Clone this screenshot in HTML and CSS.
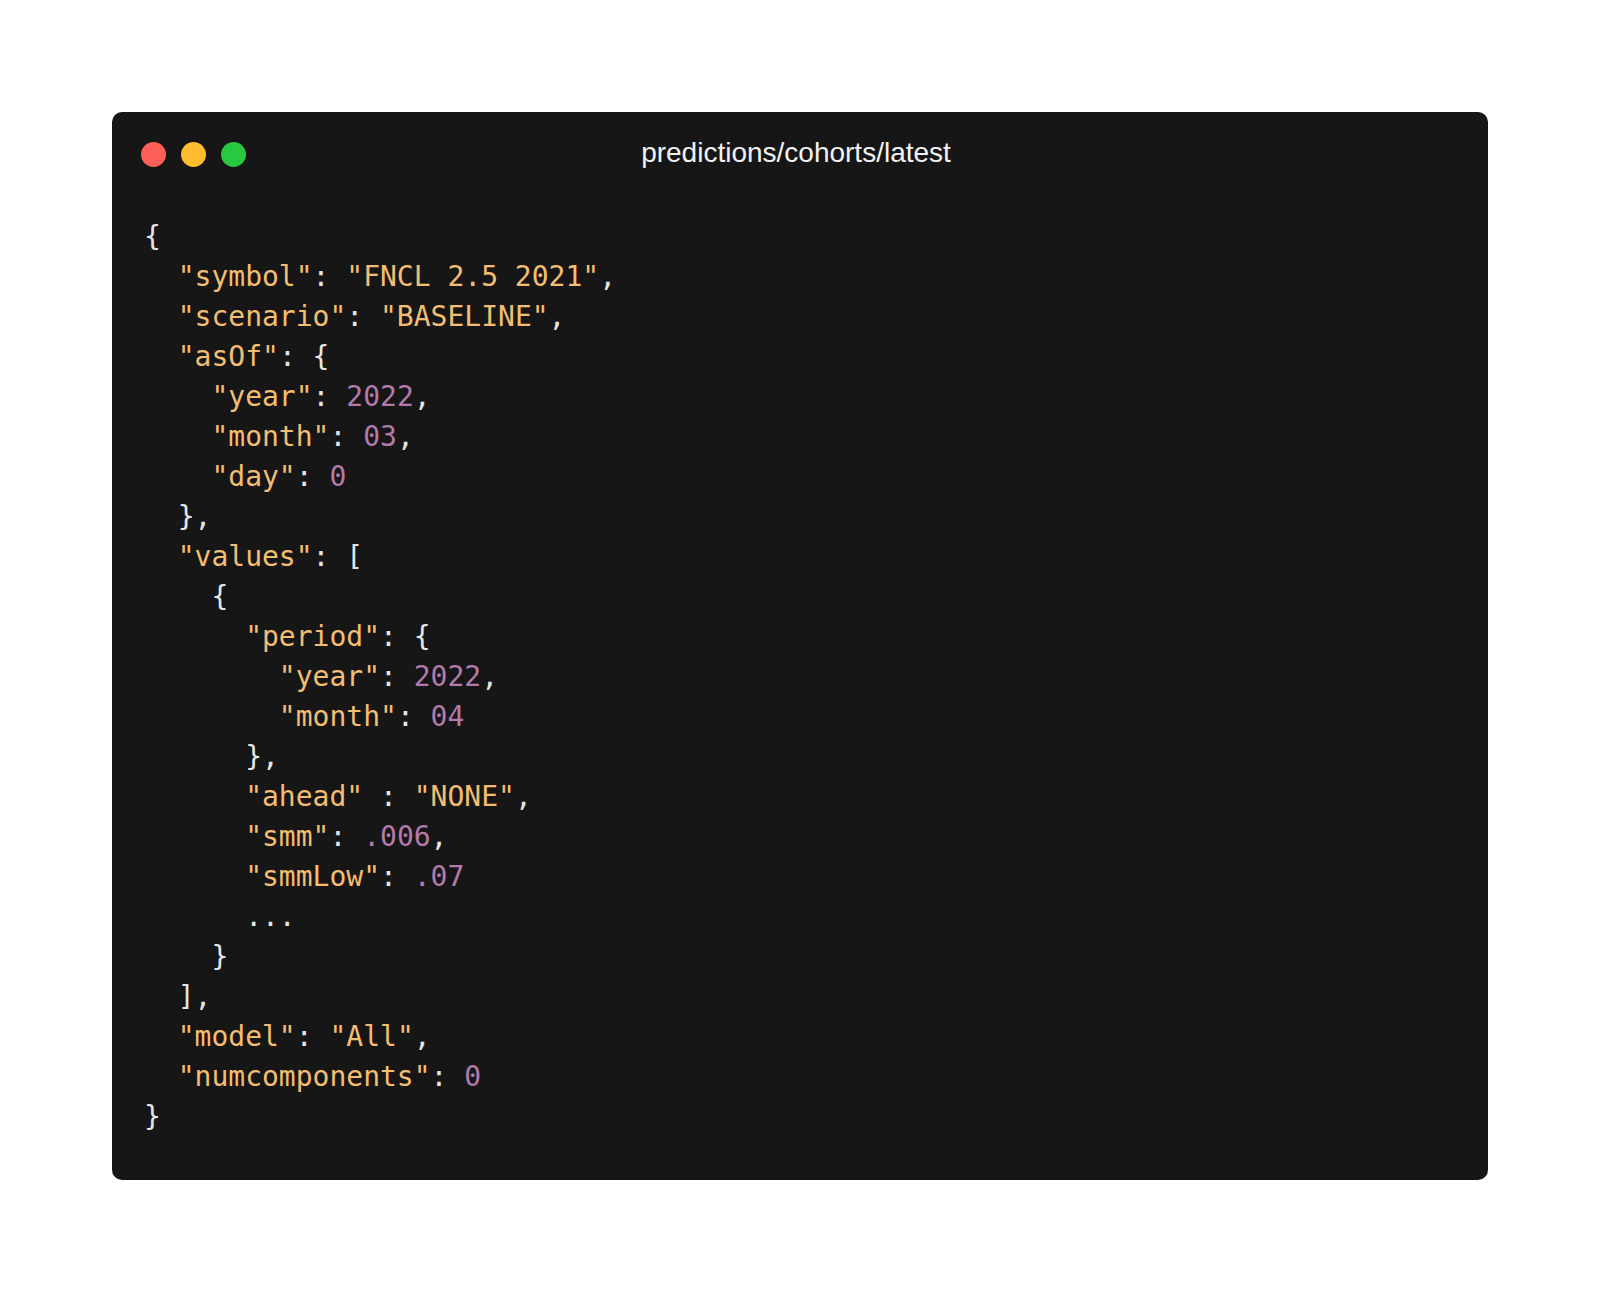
FILE: index.html
```html
<!DOCTYPE html>
<html lang="en">
<head>
  <meta charset="UTF-8" />
  <title>predictions/cohorts/latest</title>
  <link rel="stylesheet" href="styles.css">
</head>
<body>
  <div class="page">
    <div class="window">
      <div class="titlebar">
        <div class="dots">
          <span class="dot red"></span>
          <span class="dot yellow"></span>
          <span class="dot green"></span>
        </div>
        <div class="title">predictions/cohorts/latest</div>
        <div></div>
      </div>
<pre class="code">{
  <span class="k">"symbol"</span>: <span class="k">"FNCL 2.5 2021"</span>,
  <span class="k">"scenario"</span>: <span class="k">"BASELINE"</span>,
  <span class="k">"asOf"</span>: {
    <span class="k">"year"</span>: <span class="n">2022</span>,
    <span class="k">"month"</span>: <span class="n">03</span>,
    <span class="k">"day"</span>: <span class="n">0</span>
  },
  <span class="k">"values"</span>: [
    {
      <span class="k">"period"</span>: {
        <span class="k">"year"</span>: <span class="n">2022</span>,
        <span class="k">"month"</span>: <span class="n">04</span>
      },
      <span class="k">"ahead"</span> : <span class="k">"NONE"</span>,
      <span class="k">"smm"</span>: <span class="n">.006</span>,
      <span class="k">"smmLow"</span>: <span class="n">.07</span>
      ...
    }
  ],
  <span class="k">"model"</span>: <span class="k">"All"</span>,
  <span class="k">"numcomponents"</span>: <span class="n">0</span>
}</pre>
    </div>
  </div>
</body>
</html>
```

FILE: styles.css
```css
body {
  margin: 0;
  background: #ffffff;
  font-family: "Liberation Sans", Arial, sans-serif;
}
.page {
  padding: 112px;
}
.window {
  background: #161616;
  border-radius: 10px;
  height: 1068px;
  box-sizing: border-box;
}
.titlebar {
  display: grid;
  grid-template-columns: 1fr auto 1fr;
  align-items: center;
  height: 84px;
  padding: 0 29px;
}
.dots {
  display: flex;
  gap: 15px;
}
.dot {
  width: 25px;
  height: 25px;
  border-radius: 50%;
}
.red {
  background: #fe5f57;
}
.yellow {
  background: #febc2e;
}
.green {
  background: #28c840;
}
.title {
  color: #f2f2f2;
  font-size: 28px;
  margin: -2px 8px 0 0;
}
.code {
  margin: 0;
  padding: 21px 32px 0;
  font-family: "DejaVu Sans Mono", monospace;
  font-size: 28px;
  line-height: 40px;
  color: #e6e6e6;
}
.k {
  color: #f4be72;
}
.n {
  color: #b47aab;
}
```
